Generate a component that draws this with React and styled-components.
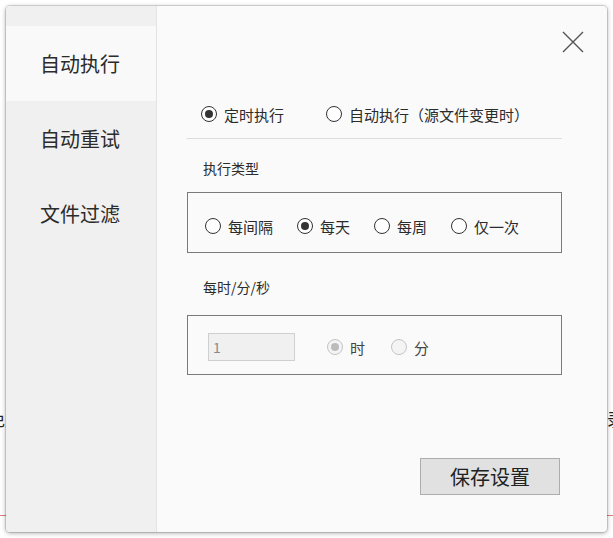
import React from "react";
import styled, { createGlobalStyle } from "styled-components";

const Global = createGlobalStyle`
  html, body { margin: 0; padding: 0; background: #ffffff; }
  body { width: 613px; height: 538px; overflow: hidden; position: relative;
    font-family: "Noto Sans CJK SC", "Noto Sans", sans-serif; color: #333; }
  * { box-sizing: border-box; }
`;

const Page = styled.div`
  width: 613px;
  height: 538px;
  padding-top: 404px;
  display: flex;
  flex-direction: column;
`;

const PageRow = styled.div`
  display: flex;
  justify-content: space-between;
  margin: 0 -11px 0 -12px;
  font-size: 17px;
  color: #222;
  line-height: 30px;
`;

const RedLine = styled.div`
  margin-top: 81px;
  height: 1px;
  flex: none;
  background: #d9807a;
`;

const Dialog = styled.div`
  position: absolute;
  left: 6px;
  top: 6px;
  width: 601px;
  height: 526px;
  display: flex;
  background: #fafafa;
  border-radius: 4px;
  box-shadow: 0 0 0 1px rgba(0,0,0,0.12), 0 1px 5px rgba(0,0,0,0.35);
  overflow: hidden;
`;

const Sidebar = styled.div`
  width: 151px;
  flex: none;
  background: #f0f0f0;
  border-right: 1px solid #e3e3e3;
  padding-top: 20px;
  display: flex;
  flex-direction: column;
`;

const NavItem = styled.div`
  height: 75px;
  display: flex;
  align-items: center;
  justify-content: center;
  padding-right: 2px;
  font-size: 20px;
  color: #2b2b2b;
  background: ${p => (p.$active ? "#f9f9f9" : "transparent")};
`;

const Main = styled.div`
  flex: 1;
  position: relative;
  padding: 96px 0 0 30px;
  display: flex;
  flex-direction: column;
`;

const Close = styled.button`
  position: absolute;
  top: 24px;
  right: 22px;
  width: 24px;
  height: 24px;
  padding: 0;
  border: none;
  background: transparent;
  display: flex;
  align-items: center;
  justify-content: center;
`;

const Content = styled.div`
  width: 375px;
  display: flex;
  flex-direction: column;
`;

const RadioRow = styled.div`
  display: flex;
  align-items: center;
  height: 24px;
  gap: ${p => p.$gap || 24}px;
  padding-left: ${p => p.$pl || 0}px;
`;

const RadioLabel = styled.label`
  display: flex;
  align-items: center;
  gap: 7px;
  font-size: 15px;
  color: ${p => (p.$disabled ? "#444" : "#2b2b2b")};
  white-space: nowrap;
`;

const Circle = styled.span`
  width: 16px;
  height: 16px;
  border-radius: 50%;
  border: 1px solid ${p => (p.$disabled ? "#c4c4c4" : "#333")};
  background: ${p => (p.$disabled ? "#f4f4f4" : "#fff")};
  display: flex;
  align-items: center;
  justify-content: center;
  flex: none;
  &::after {
    content: "";
    display: ${p => (p.$checked ? "block" : "none")};
    width: 8px;
    height: 8px;
    border-radius: 50%;
    background: ${p => (p.$disabled ? "#bcbcbc" : "#333")};
  }
`;

const Separator = styled.div`
  height: 1px;
  background: #dcdcdc;
  margin-top: 12px;
`;

const SectionLabel = styled.div`
  font-size: 14px;
  line-height: 20px;
  color: #2b2b2b;
  padding-left: 16px;
  margin-top: ${p => p.$mt}px;
`;

const Box = styled.div`
  border: 1px solid #7a7a7a;
  margin-top: ${p => p.$mt}px;
  height: ${p => p.$h}px;
  padding: ${p => p.$pt}px 0 0 ${p => p.$pl}px;
  display: flex;
  align-items: flex-start;
`;

const NumInput = styled.div`
  width: 87px;
  height: 28px;
  border: 1px solid #cfcfcf;
  background: #f0f0f0;
  color: #8a8a8a;
  font-size: 14px;
  display: flex;
  align-items: center;
  padding-left: 4px;
  flex: none;
`;

const ValueRow = styled.div`
  display: flex;
  align-items: center;
  height: 28px;
  gap: 26px;
`;

const Units = styled.div`
  display: flex;
  align-items: center;
  margin-left: 32px;
`;

const SaveButton = styled.button`
  align-self: flex-end;
  margin: 83px 2px 0 0;
  width: 140px;
  height: 37px;
  background: #e1e1e1;
  border: 1px solid #adadad;
  font-family: inherit;
  font-size: 20px;
  color: #222;
  padding: 0;
`;

const Radio = ({ label, checked, disabled }) => (
  <RadioLabel $disabled={disabled}>
    <Circle $checked={checked} $disabled={disabled} />
    {label}
  </RadioLabel>
);

export default function App() {
  return (
    <>
      <Global />
      <Page>
        <PageRow>
          <span>免费</span>
          <span>记录</span>
        </PageRow>
        <RedLine />
      </Page>
      <Dialog>
        <Sidebar>
          <NavItem $active>自动执行</NavItem>
          <NavItem>自动重试</NavItem>
          <NavItem>文件过滤</NavItem>
        </Sidebar>
        <Main>
          <Close aria-label="关闭">
            <svg width="22" height="22" viewBox="0 0 22 22">
              <path d="M1 1 L21 21 M21 1 L1 21" stroke="#555" strokeWidth="1.4" fill="none" />
            </svg>
          </Close>
          <Content>
            <RadioRow $gap={42} $pl={14}>
              <Radio label="定时执行" checked />
              <Radio label="自动执行（源文件变更时）" />
            </RadioRow>
            <Separator />
            <SectionLabel $mt={19}>执行类型</SectionLabel>
            <Box $mt={14} $h={61} $pt={21} $pl={17}>
              <RadioRow $gap={24}>
                <Radio label="每间隔" />
                <Radio label="每天" checked />
                <Radio label="每周" />
                <Radio label="仅一次" />
              </RadioRow>
            </Box>
            <SectionLabel $mt={24}>每时/分/秒</SectionLabel>
            <Box $mt={18} $h={60} $pt={17} $pl={20}>
              <ValueRow>
                <NumInput>1</NumInput>
              </ValueRow>
              <Units>
                <ValueRow>
                  <Radio label="时" checked disabled />
                  <Radio label="分" disabled />
                </ValueRow>
              </Units>
            </Box>
            <SaveButton>保存设置</SaveButton>
          </Content>
        </Main>
      </Dialog>
    </>
  );
}
